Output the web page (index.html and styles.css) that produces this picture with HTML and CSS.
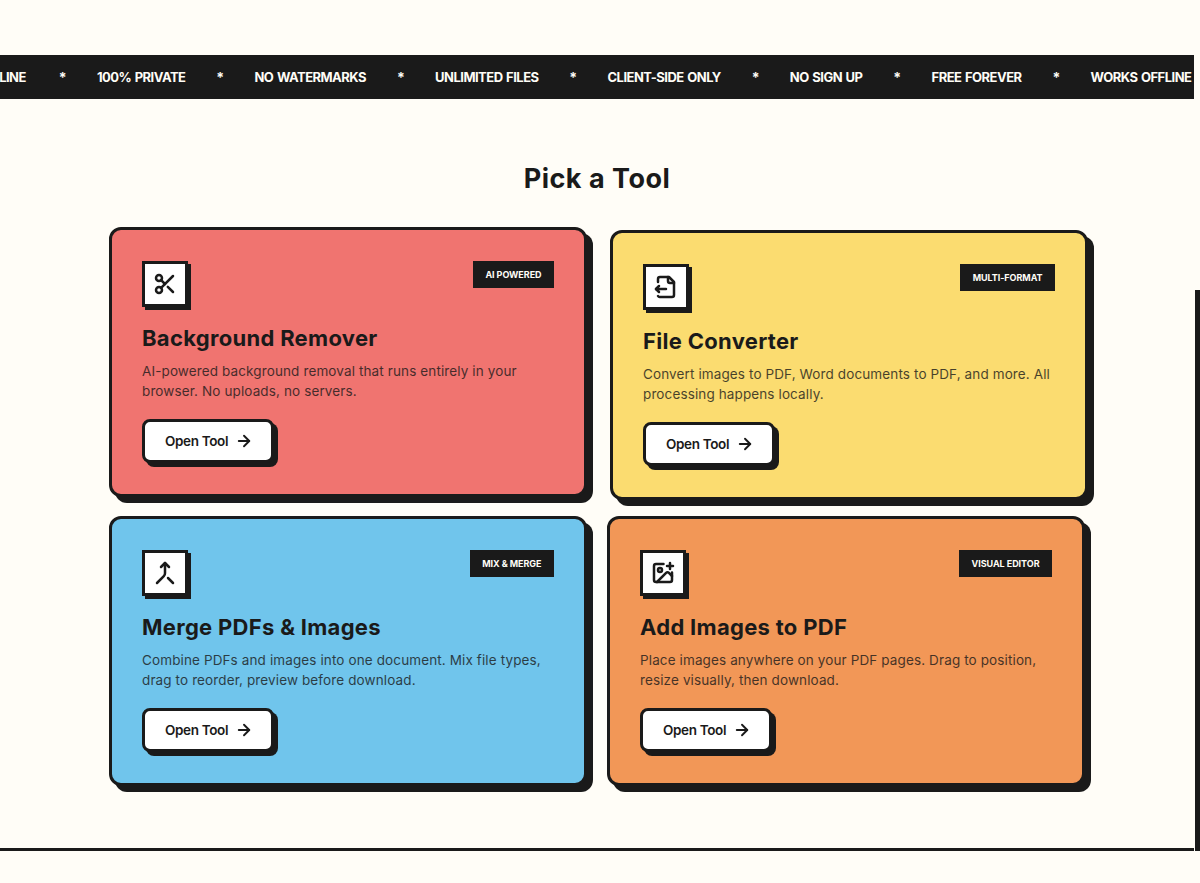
FILE: index.html
```html
<!DOCTYPE html>
<html lang="en">
<head>
<meta charset="utf-8">
<title>Pick a Tool</title>
<link rel="stylesheet" href="styles.css">
</head>
<body>
<div class="page">
  <div class="marquee">
    <div class="track">
      <span class="m m-1">WORKS OFFLINE</span><span class="star">*</span>
      <span class="m">100% PRIVATE</span><span class="star">*</span>
      <span class="m">NO WATERMARKS</span><span class="star">*</span>
      <span class="m">UNLIMITED FILES</span><span class="star">*</span>
      <span class="m">CLIENT-SIDE ONLY</span><span class="star">*</span>
      <span class="m">NO SIGN UP</span><span class="star">*</span>
      <span class="m">FREE FOREVER</span><span class="star">*</span>
      <span class="m">WORKS OFFLINE</span>
    </div>
  </div>
  <section class="tools">
    <h2 class="title">Pick a Tool</h2>
    <div class="grid">
      <article class="card red lift">
        <div class="top">
          <div class="icon"><svg viewBox="0 0 24 24"><circle cx="6" cy="6" r="3"/><path d="M8.12 8.12 12 12"/><path d="M20 4 8.12 15.88"/><circle cx="6" cy="18" r="3"/><path d="M14.8 14.8 20 20"/></svg></div>
          <span class="badge">AI POWERED</span>
        </div>
        <h3>Background Remover</h3>
        <p>AI-powered background removal that runs entirely in your browser. No uploads, no servers.</p>
        <a class="btn">Open Tool <svg viewBox="0 0 24 24"><path d="M5 12h14"/><path d="m12 5 7 7-7 7"/></svg></a>
      </article>
      <article class="card yellow shift">
        <div class="top">
          <div class="icon"><svg viewBox="0 0 24 24"><path d="M14 2v4a2 2 0 0 0 2 2h4"/><path d="M4 7V4a2 2 0 0 1 2-2h9l5 5v13a2 2 0 0 1-2 2H6a2 2 0 0 1-2-1"/><path d="m5 11-3 3"/><path d="m5 17-3-3h10"/></svg></div>
          <span class="badge">MULTI-FORMAT</span>
        </div>
        <h3>File Converter</h3>
        <p>Convert images to PDF, Word documents to PDF, and more. All processing happens locally.</p>
        <a class="btn">Open Tool <svg viewBox="0 0 24 24"><path d="M5 12h14"/><path d="m12 5 7 7-7 7"/></svg></a>
      </article>
      <article class="card blue">
        <div class="top">
          <div class="icon"><svg viewBox="0 0 24 24"><path d="m8 6 4-4 4 4"/><path d="M12 2v10.3a4 4 0 0 1-1.172 2.872L4 22"/><path d="m20 22-5-5"/></svg></div>
          <span class="badge">MIX &amp; MERGE</span>
        </div>
        <h3>Merge PDFs &amp; Images</h3>
        <p>Combine PDFs and images into one document. Mix file types, drag to reorder, preview before download.</p>
        <a class="btn">Open Tool <svg viewBox="0 0 24 24"><path d="M5 12h14"/><path d="m12 5 7 7-7 7"/></svg></a>
      </article>
      <article class="card orange">
        <div class="top">
          <div class="icon"><svg viewBox="0 0 24 24"><path d="M16 5h6"/><path d="M19 2v6"/><path d="M21 11.5V19a2 2 0 0 1-2 2H5a2 2 0 0 1-2-2V5a2 2 0 0 1 2-2h7.5"/><path d="m21 15-3.086-3.086a2 2 0 0 0-2.828 0L6 21"/><circle cx="9" cy="9" r="2"/></svg></div>
          <span class="badge">VISUAL EDITOR</span>
        </div>
        <h3>Add Images to PDF</h3>
        <p>Place images anywhere on your PDF pages. Drag to position, resize visually, then download.</p>
        <a class="btn">Open Tool <svg viewBox="0 0 24 24"><path d="M5 12h14"/><path d="m12 5 7 7-7 7"/></svg></a>
      </article>
    </div>
  </section>
  <div class="edge"></div>
</div>
</body>
</html>
```
FILE: styles.css
```css
* { box-sizing: border-box; }
html, body { margin: 0; height: 883px; overflow: hidden; }
body { background: #fffdf7; color: #1a1a1a; font-family: Inter, "Noto Sans", sans-serif; }
.page { position: relative; width: 1200px; height: 883px; padding-top: 55px; }
.marquee { width: 1194px; height: 44px; background: #1a1a1a; overflow: hidden; display: flex; align-items: center; }
.track { display: flex; align-items: center; gap: 30.5px; margin-left: -75px; white-space: nowrap; color: #fffdf7; font-size: 13px; font-weight: 700; letter-spacing: -.52px; word-spacing: 1px; }
.m-1 { margin-right: 2px; }
.star { width: 8px; text-align: center; font-size: 14px; }
.tools { width: 1194px; height: 752px; border-bottom: 3px solid #1a1a1a; padding-top: 61px; }
.title { margin: 0 0 32px; text-align: center; font-size: 27px; line-height: 38px; font-weight: 700; letter-spacing: .5px; }
.grid { width: 976px; margin: 0 auto; display: grid; grid-template-columns: 478px 478px; column-gap: 20px; row-gap: 16px; }
.card { height: 270px; border: 3px solid #1a1a1a; border-radius: 12px; box-shadow: 6px 6px 0 #1a1a1a; padding: 31px 30px 0; }
.lift { transform: translateY(-3px); }
.shift { transform: translateX(3px); }
.red { background: #f07470; }
.yellow { background: #fbdc70; }
.blue { background: #70c5ec; }
.orange { background: #f29757; }
.top { display: flex; justify-content: space-between; align-items: flex-start; }
.icon { width: 46px; height: 46px; background: #fff; border: 3px solid #1a1a1a; box-shadow: 3px 3px 0 #1a1a1a; display: flex; align-items: center; justify-content: center; }
.icon svg { width: 24px; height: 24px; fill: none; stroke: #1a1a1a; stroke-width: 2.5; stroke-linecap: round; stroke-linejoin: round; }
.badge { background: #1a1a1a; color: #fffdf7; font-size: 9px; font-weight: 700; line-height: 27px; height: 27px; padding: 0 12.5px; letter-spacing: -.05px; }
.card h3 { margin: 15px 0 8px; font-size: 22px; line-height: 32px; font-weight: 700; letter-spacing: .3px; }
.card p { margin: 0 0 18px; font-size: 13.5px; line-height: 19.6px; letter-spacing: .12px; color: #1a1a1a; opacity: .8; }
.btn { display: inline-flex; align-items: center; gap: 7px; height: 44px; padding: 0 18px 0 20px; background: #fff; border: 3px solid #1a1a1a; border-radius: 8px; box-shadow: 4px 4px 0 #1a1a1a; font-size: 13.5px; font-weight: 600; letter-spacing: -.35px; }
.btn svg { width: 18px; height: 18px; fill: none; stroke: #1a1a1a; stroke-width: 2.5; stroke-linecap: round; stroke-linejoin: round; }
.edge { position: absolute; left: 1195px; top: 290px; width: 5px; height: 561px; background: #1a1a1a; }
```
